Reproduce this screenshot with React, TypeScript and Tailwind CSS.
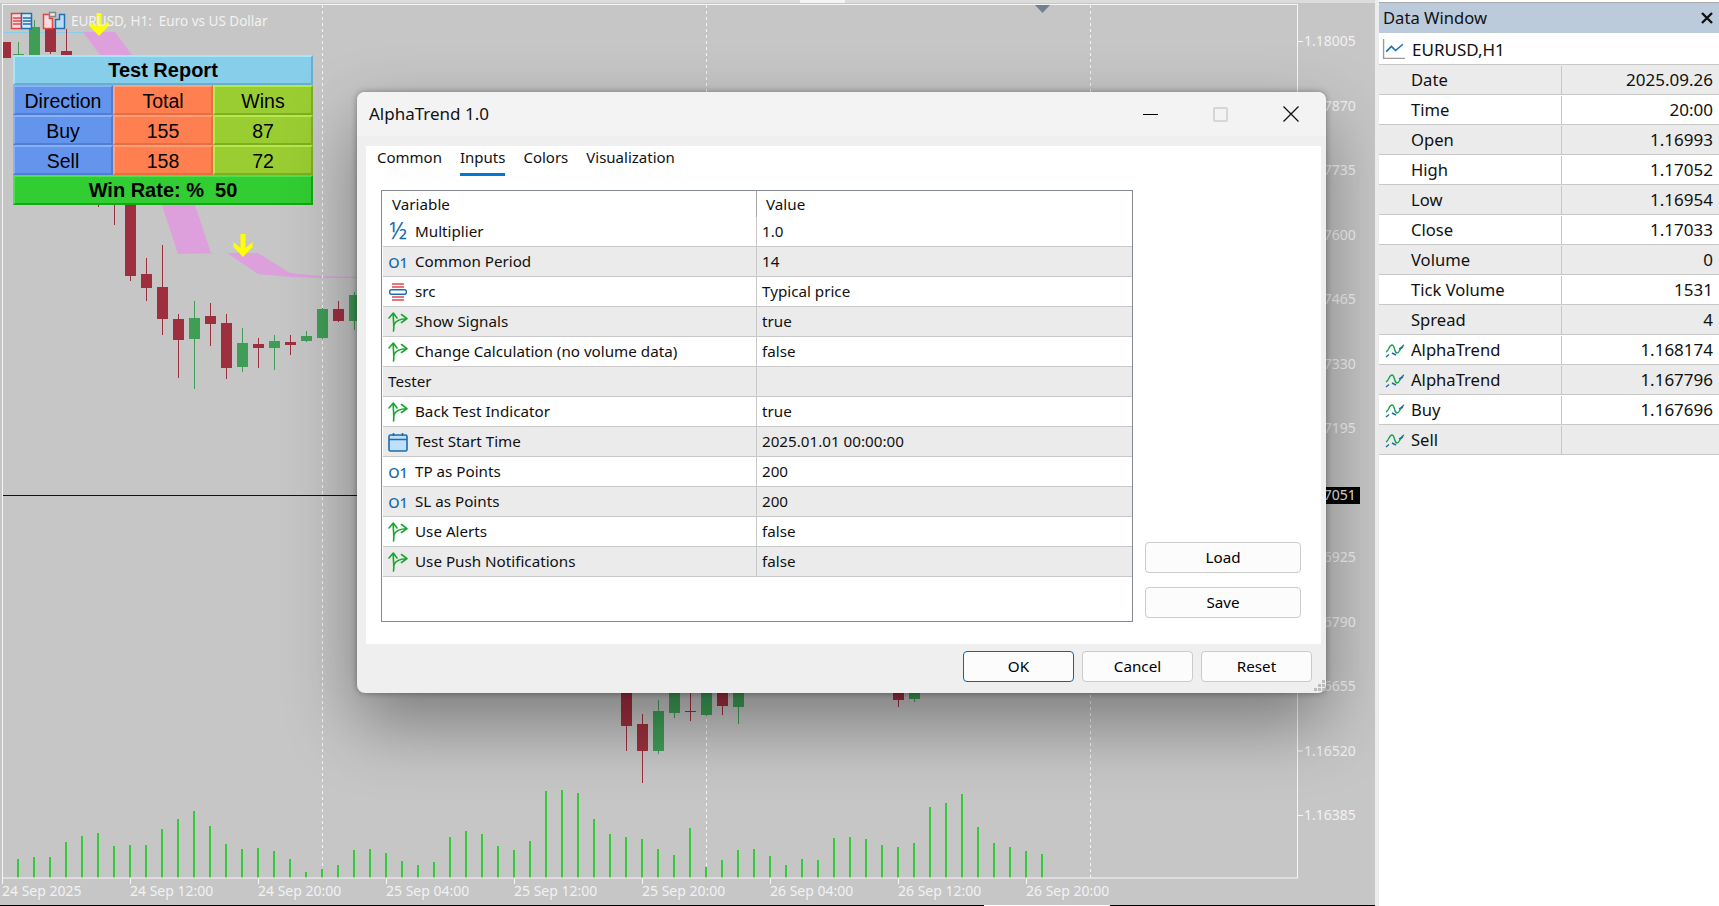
import React from 'react';

const volumes = [
  537, 531, 531, 486, 468, 459, 498, 495, 495, 447, 417, 393, 438, 492, 507, 504, 513, 537, 576, 567, 555, 510,
  507, 519, 543, 555, 546, 471, 453, 462, 498, 510, 483, 333, 330, 339, 417, 462, 471, 477, 507, 525, 444, 561,
  540, 510, 507, 528, 555, 537, 540, 474, 471, 477, 495, 501, 489, 381, 369, 342, 441, 489, 501, 513, 522,
];

// x, body top, body bottom, wick top, wick bottom, up?
const candles: [number, number, number, number, number, boolean][] = [
  [6, 42, 58, 42, 58, false],
  [18, 54, 55, 42, 56, true],
  [34, 27, 60, 20, 60, true],
  [50, 28, 52, 28, 54, false],
  [66, 51, 60, 29, 60, false],
  [98, 190, 200, 190, 207, false],
  [114, 190, 200, 190, 225, false],
  [130, 190, 276, 190, 281, false],
  [146, 274, 288, 258, 301, false],
  [162, 287, 319, 245, 335, false],
  [178, 319, 340, 314, 378, false],
  [194, 318, 339, 301, 389, true],
  [210, 316, 324, 303, 346, false],
  [226, 323, 368, 314, 379, false],
  [242, 343, 367, 328, 372, true],
  [258, 344, 348, 338, 368, false],
  [274, 341, 348, 335, 370, true],
  [290, 342, 345, 335, 355, false],
  [306, 336, 341, 331, 342, true],
  [322, 309, 338, 308, 339, true],
  [338, 309, 321, 301, 322, false],
  [354, 295, 321, 292, 330, true],
  [626, 650, 726, 650, 751, false],
  [642, 724, 751, 714, 783, false],
  [658, 711, 751, 700, 754, true],
  [674, 650, 713, 650, 718, true],
  [690, 711, 712, 650, 721, false],
  [706, 650, 715, 650, 716, true],
  [722, 650, 706, 650, 715, false],
  [738, 650, 707, 650, 724, true],
  [898, 650, 700, 650, 707, false],
  [914, 650, 699, 650, 702, true],
];

const prices = ['1.18005', '1.17870', '1.17735', '1.17600', '1.17465', '1.17330', '1.17195', '', '1.16925', '1.16790', '1.16655', '1.16520', '1.16385'];
const times = ['24 Sep 2025', '24 Sep 12:00', '24 Sep 20:00', '25 Sep 04:00', '25 Sep 12:00', '25 Sep 20:00', '26 Sep 04:00', '26 Sep 12:00', '26 Sep 20:00'];

type RowKind = 'half' | 'int' | 'enum' | 'bool' | 'date' | 'none';

const inputs: { kind: RowKind; name: string; value: string }[] = [
  { kind: 'half', name: 'Multiplier', value: '1.0' },
  { kind: 'int', name: 'Common Period', value: '14' },
  { kind: 'enum', name: 'src', value: 'Typical price' },
  { kind: 'bool', name: 'Show Signals', value: 'true' },
  { kind: 'bool', name: 'Change Calculation (no volume data)', value: 'false' },
  { kind: 'none', name: 'Tester', value: '' },
  { kind: 'bool', name: 'Back Test Indicator', value: 'true' },
  { kind: 'date', name: 'Test Start Time', value: '2025.01.01 00:00:00' },
  { kind: 'int', name: 'TP as Points', value: '200' },
  { kind: 'int', name: 'SL as Points', value: '200' },
  { kind: 'bool', name: 'Use Alerts', value: 'false' },
  { kind: 'bool', name: 'Use Push Notifications', value: 'false' },
];

const dataRows: { name: string; value: string; wave?: boolean }[] = [
  { name: 'Date', value: '2025.09.26' },
  { name: 'Time', value: '20:00' },
  { name: 'Open', value: '1.16993' },
  { name: 'High', value: '1.17052' },
  { name: 'Low', value: '1.16954' },
  { name: 'Close', value: '1.17033' },
  { name: 'Volume', value: '0' },
  { name: 'Tick Volume', value: '1531' },
  { name: 'Spread', value: '4' },
  { name: 'AlphaTrend', value: '1.168174', wave: true },
  { name: 'AlphaTrend', value: '1.167796', wave: true },
  { name: 'Buy', value: '1.167696', wave: true },
  { name: 'Sell', value: '', wave: true },
];

function arrowPoints(cx: number, top: number) {
  return [
    [cx - 2.5, top],
    [cx + 2.5, top],
    [cx + 2.5, top + 14],
    [cx + 9.5, top + 8],
    [cx + 9.5, top + 13],
    [cx, top + 23],
    [cx - 9.5, top + 13],
    [cx - 9.5, top + 8],
    [cx - 2.5, top + 14],
  ]
    .map((p) => p.join(','))
    .join(' ');
}

function ChartCanvas() {
  return (
    <svg width="1375" height="906" className="block">
      <rect x="0" y="0" width="1375" height="3" fill="#dcdcdc" />
      <rect x="800" y="0" width="45" height="3" fill="#f4f4f4" />
      <rect x="0" y="905" width="984" height="1" fill="#000" />
      <rect x="984" y="905" width="126" height="1" fill="#fff" />
      <rect x="1110" y="905" width="265" height="1" fill="#000" />
      {/* plum cloud and its upper line */}
      <rect x="3" y="32" width="80" height="1" fill="#87ceeb" />
      <polygon
        points="83,32 115,32 132,55 195,205 211,253 258,253 290,273 320,276 360,277 360,278 320,278 290,277 258,274 227,253 178,254 162,205 100,55"
        fill="#dda0dd"
      />
      {[322, 706, 1090].map((x) => (
        <line key={x} x1={x + 0.5} y1="5" x2={x + 0.5} y2="878" stroke="#f4f4f4" strokeDasharray="3 3" />
      ))}
      {candles.map(([x, top, bottom, wickTop, wickBottom, up]) => (
        <g key={x} fill={up ? '#3f9d56' : '#9e2f3f'}>
          <rect x={x} y={wickTop} width="1" height={wickBottom - wickTop} />
          <rect x={Math.max(x - 5, 3)} y={top} width={x - 5 < 3 ? 8 : 11} height={bottom - top} />
        </g>
      ))}
      {volumes.map((top, i) => (
        <rect key={i} x={17 + i * 16} y={680 + top / 3} width="2" height={(594 - top) / 3} fill="#32cd32" />
      ))}
      <polygon points={arrowPoints(99, 13)} fill="#ffff00" />
      <polygon points={arrowPoints(243, 234)} fill="#ffff00" />
      <rect x="3" y="495" width="1295" height="1" fill="#111" />
      <polygon points="1035,5 1050,5 1042.5,13" fill="#708090" />
      <rect x="2.5" y="4.5" width="1295" height="873.5" fill="none" stroke="#f6f6f6" />
      <g fontSize="14" fill="#f2f2f2">
        {prices.map((p, i) =>
          p ? (
            <g key={p}>
              <rect x="1298" y={41 + i * 64.5} width="5" height="1" fill="#f6f6f6" />
              <text x="1304" y={46 + i * 64.5}>
                {p}
              </text>
            </g>
          ) : null,
        )}
        {times.map((t, i) => (
          <g key={t}>
            <rect x={2 + i * 128} y="878" width="1" height="6" fill="#f6f6f6" />
            <text x={2 + i * 128} y="896">
              {t}
            </text>
          </g>
        ))}
        <rect x="1298" y="487" width="62" height="17" fill="#000" />
        <text x="1304" y="500" fill="#e8e8e8">
          1.17051
        </text>
      </g>
      {/* small indicator and chart buttons */}
      <g fill="none" strokeWidth="1.5">
        <rect x="11.5" y="13.5" width="10" height="15" fill="#fbdcdc" stroke="#e04848" />
        <rect x="21.5" y="13.5" width="10" height="15" fill="#d8ebfa" stroke="#1f6fb2" />
        <path d="M13 18h8M13 21h8M13 24h8" stroke="#e04848" />
        <path d="M23 18h8M23 21h8M23 24h8" stroke="#1f6fb2" />
        <path d="M43.5 14.5h6v4h3v10h-9z" fill="#fbdcdc" stroke="#e04848" />
        <path d="M64.5 14.5h-5v5h-4v9h9z" fill="#b8dcf6" stroke="#1f6fb2" />
        <rect x="49.5" y="12.5" width="6" height="4" fill="#eee" stroke="#888" />
      </g>
      <text x="71" y="26" fontSize="13.5" fill="#f2f2f2">
        {'EURUSD, H1:\u00a0\u00a0Euro vs US Dollar'}
      </text>
    </svg>
  );
}

function ReportCell({ color, light, dark, bold, children }: { color: string; light: string; dark: string; bold?: boolean; children: React.ReactNode }) {
  return (
    <div
      className={`flex items-center justify-center border-2 leading-none text-black ${bold ? 'text-[20px] font-bold' : 'pt-[3px] text-[19.5px]'}`}
      style={{ backgroundColor: color, borderTopColor: light, borderLeftColor: light, borderBottomColor: dark, borderRightColor: dark }}
    >
      {children}
    </div>
  );
}

function TestReport() {
  const blue = { color: '#6495ed', light: '#8ab1f5', dark: '#4f7fd4' };
  const coral = { color: '#ff7f50', light: '#ffa07a', dark: '#e86d40' };
  const green = { color: '#9acd32', light: '#b5ea4a', dark: '#7fae20' };
  return (
    <div className="absolute left-[13px] top-[55px] grid w-[300px] grid-cols-3 grid-rows-[repeat(5,30px)] font-['Liberation_Sans',sans-serif]">
      <div className="col-span-3 grid">
        <ReportCell color="#87ceeb" light="#a6e6fb" dark="#68aed0" bold>
          Test Report
        </ReportCell>
      </div>
      <ReportCell {...blue}>Direction</ReportCell>
      <ReportCell {...coral}>Total</ReportCell>
      <ReportCell {...green}>Wins</ReportCell>
      <ReportCell {...blue}>Buy</ReportCell>
      <ReportCell {...coral}>155</ReportCell>
      <ReportCell {...green}>87</ReportCell>
      <ReportCell {...blue}>Sell</ReportCell>
      <ReportCell {...coral}>158</ReportCell>
      <ReportCell {...green}>72</ReportCell>
      <div className="col-span-3 grid">
        <ReportCell color="#32cd32" light="#4fe04f" dark="#12aa12" bold>
          Win Rate: %&nbsp; 50
        </ReportCell>
      </div>
    </div>
  );
}

function InputIcon({ kind }: { kind: RowKind }) {
  if (kind === 'half') {
    return <span className="block h-5 w-5 -translate-y-[2px] text-center text-[23px] leading-5 text-[#1b6cb0]">½</span>;
  }
  if (kind === 'int') {
    return <span className="block w-5 text-center text-[14.5px] font-medium leading-5 text-[#1b6cb0]">O1</span>;
  }
  if (kind === 'enum') {
    return (
      <svg width="20" height="20" viewBox="0 0 20 20" fill="none" strokeWidth="1.4">
        <path d="M4 2h12M4 5h12M4 15h12M4 18h12" stroke="#e0484f" />
        <rect x="1.7" y="7.7" width="16.6" height="4.6" rx="1.8" stroke="#1b6cb0" fill="#fff" />
      </svg>
    );
  }
  if (kind === 'bool') {
    return (
      <svg width="20" height="20" viewBox="0 0 20 20" fill="none" stroke="#16a82e" strokeWidth="1.6" strokeLinecap="round" strokeLinejoin="round">
        <path d="M5.5 19c1-5-.6-12-.2-18M1 6l4.3-5L9 6" />
        <path d="M5.8 13c1.500-4 6-6.300 13-6.300M13.500 2.500l5.500 4.200-5.500 3.800" />
      </svg>
    );
  }
  if (kind === 'date') {
    return (
      <svg width="20" height="20" viewBox="0 0 20 20" strokeWidth="1.6">
        <rect x="1" y="3" width="18" height="16" rx="1.500" fill="#bfe0fa" stroke="#1b6cb0" />
        <path d="M1 7.500h18M5.500 1v3M14.500 1v3" stroke="#1b6cb0" fill="none" />
      </svg>
    );
  }
  return null;
}

function DialogButton({ label, width, primary }: { label: string; width: string; primary?: boolean }) {
  return (
    <button className={`flex h-[31px] items-center justify-center rounded-[4px] border bg-[#fcfcfc] pb-[2px] text-black ${width} ${primary ? 'border-[#0067c0]' : 'border-[#cbcbcb]'}`}>
      {label}
    </button>
  );
}

function InputsTable() {
  return (
    <div className="flex h-[432px] w-[752px] flex-col border border-[#858a92] bg-white">
      <div className="flex h-[26px] shrink-0">
        <div className="w-[375px] border-r border-[#a6a6a6] pl-[10px] pt-[3px]">Variable</div>
        <div className="pl-[9px] pt-[3px]">Value</div>
      </div>
      {inputs.map((row, i) => (
        <div key={row.name} className={`ml-[1px] flex h-[30px] shrink-0 items-center border-b border-[#c8c8c8] ${i % 2 === 1 ? 'bg-[#ebebeb]' : 'bg-white'}`}>
          <div className="flex h-full w-[374px] items-center gap-[7px] border-r border-[#c8c8c8] pl-[5px]">
            {row.kind !== 'none' && <InputIcon kind={row.kind} />}
            <span className="-translate-y-px">{row.name}</span>
          </div>
          <div className="-translate-y-px pl-[5px]">{row.value}</div>
        </div>
      ))}
    </div>
  );
}

function SettingsDialog() {
  return (
    <div className="absolute left-[357px] top-[92px] flex h-[601px] w-[969px] flex-col rounded-[8px] bg-[#efefef] text-[15.2px] leading-5 text-[#111] shadow-[0_30px_70px_rgba(0,0,0,0.38),0_0_6px_rgba(0,0,0,0.35)]">
      <div className="flex h-[44px] shrink-0 items-center justify-between rounded-t-[8px] bg-[#f3f3f3] pl-[12px]">
        <span className="text-[17px]">AlphaTrend 1.0</span>
        <div className="flex items-center">
          <div className="h-px w-[15px] bg-black" />
          <div className="ml-[55px] h-[15px] w-[15px] rounded-[2px] border-2 border-[#d6d6d6]" />
          <svg width="16" height="16" viewBox="0 0 16 16" className="ml-[55px] mr-[27px]" stroke="#111" strokeWidth="1.3">
            <path d="M.5.5l15 15M15.500.5l-15 15" />
          </svg>
        </div>
      </div>
      <div className="ml-[9px] mr-[5px] mt-[10px] flex h-[498px] shrink-0 flex-col bg-white">
        <div className="flex h-[30px] shrink-0 gap-[18px] pl-[11px] text-[15px]">
          {['Common', 'Inputs', 'Colors', 'Visualization'].map((tab) => (
            <div key={tab} className={`h-[30px] pt-px ${tab === 'Inputs' ? 'border-b-[3px] border-[#0078d4]' : ''}`}>
              {tab}
            </div>
          ))}
        </div>
        <div className="ml-[15px] mt-[14px] flex">
          <InputsTable />
          <div className="ml-[12px] flex h-[433px] w-[156px] flex-col justify-end gap-[14px] pb-[5px]">
            <DialogButton label="Load" width="w-full" />
            <DialogButton label="Save" width="w-full" />
          </div>
        </div>
      </div>
      <div className="flex justify-end gap-[8px] pr-[14px] pt-[7px]">
        <DialogButton label="OK" width="w-[111px]" primary />
        <DialogButton label="Cancel" width="w-[111px]" />
        <DialogButton label="Reset" width="w-[111px]" />
      </div>
      <svg width="12" height="12" className="absolute bottom-[1px] right-[1px]" fill="#bdbdbd">
        <rect x="9" y="0" width="3" height="3" />
        <rect x="5" y="4" width="3" height="3" />
        <rect x="9" y="4" width="3" height="3" />
        <rect x="1" y="8" width="3" height="3" />
        <rect x="5" y="8" width="3" height="3" />
        <rect x="9" y="8" width="3" height="3" />
      </svg>
    </div>
  );
}

function WaveIcon() {
  return (
    <svg width="20" height="16" viewBox="0 0 20 16" fill="none" strokeWidth="1.4">
      <path d="M1 10c3-1 3-7 6-7s2 8 5 8 3-6 7-8" stroke="#18a34a" />
      <path d="M1 15l3-2.500M7 11l4 2M14 7l4-2" stroke="#1b6cb0" />
    </svg>
  );
}

function DataWindow() {
  return (
    <div className="flex w-[340px] shrink-0 flex-col bg-white text-[16.6px] leading-5 text-[#111]">
      <div className="mt-[2px] flex h-[31px] shrink-0 items-center justify-between border-t border-[#aaa] bg-[#bccbdb] pl-[4px] pr-[6px]">
        <span>Data Window</span>
        <svg width="12" height="12" viewBox="0 0 12 12" stroke="#111" strokeWidth="2.4">
          <path d="M1 1l10 10M11 1L1 11" />
        </svg>
      </div>
      <div className="flex h-[32px] shrink-0 items-center gap-[7px] border-b border-[#c8c8c8] pl-[3px] pt-[2px] text-[17px]">
        <svg width="23" height="21" viewBox="0 0 22 20" fill="none">
          <path d="M1.500 0v18.500h21" stroke="#9a9a9a" strokeWidth="1.300" />
          <path d="M4 12l5-5 4 4 7-6" stroke="#1b6cb0" strokeWidth="1.500" />
        </svg>
        <span>EURUSD,H1</span>
      </div>
      {dataRows.map((row, i) => (
        <div key={row.name + row.value} className={`flex h-[30px] shrink-0 items-center border-b border-[#c8c8c8] pt-px ${i % 2 === 0 ? 'bg-[#ebebeb]' : 'bg-white'}`}>
          <div className="flex h-full w-[183px] items-center border-r border-[#c8c8c8]">
            <div className="flex w-[32px] justify-center">{row.wave && <WaveIcon />}</div>
            <span>{row.name}</span>
          </div>
          <div className="flex-1 pr-[6px] text-right text-[17px]">{row.value}</div>
        </div>
      ))}
    </div>
  );
}

export default function App() {
  return (
    <div className="flex h-[906px] w-[1719px] overflow-hidden bg-white font-['Noto_Sans',sans-serif]">
      <div className="relative w-[1375px] shrink-0 overflow-hidden bg-[#c6c6c6]">
        <ChartCanvas />
        <TestReport />
        <SettingsDialog />
      </div>
      <div className="w-[4px] shrink-0 bg-[#ececec]" />
      <DataWindow />
    </div>
  );
}
